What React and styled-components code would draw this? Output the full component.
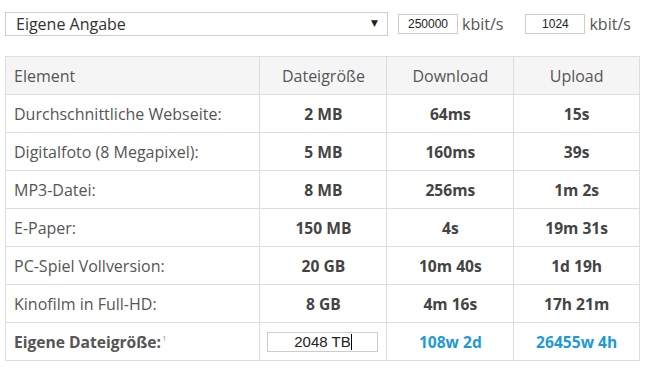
import React from "react";
import styled, { createGlobalStyle } from "styled-components";

const GlobalStyle = createGlobalStyle`
  body {
    margin: 0;
    background: #fff;
    font-family: "Open Sans", "Liberation Sans", sans-serif;
  }
`;

const Page = styled.div`
  width: 646px;
  padding: 12px 6px 0 5px;
  box-sizing: border-box;
`;

const Toolbar = styled.div`
  display: flex;
  align-items: center;
  height: 24px;
`;

const SelectBox = styled.div`
  position: relative;
  width: 383px;
  height: 24px;
  box-sizing: border-box;
  border: 1px solid #ccc;
  display: flex;
  align-items: center;
  padding-left: 10px;
  font-size: 16px;
  color: #333;
`;

const Arrow = styled.span`
  position: absolute;
  right: 9px;
  top: 5px;
  font-size: 9px;
  color: #222;
  font-family: "DejaVu Sans", sans-serif;
`;

const RateInput = styled.input`
  width: 60px;
  height: 20px;
  box-sizing: border-box;
  border: 1px solid #ccc;
  margin-left: ${(p) => p.$gap}px;
  font-family: "Liberation Sans", Arial, sans-serif;
  font-size: 12px;
  text-align: center;
  color: #222;
  padding: 0;
  outline: none;
`;

const Unit = styled.span`
  margin-left: 4px;
  font-size: 16px;
  color: #555;
`;

const Table = styled.table`
  margin-top: 20px;
  width: 635px;
  border-collapse: collapse;
  font-size: 16px;
`;

const Col = styled.col`
  width: ${(p) => p.$w}px;
`;

const Th = styled.th`
  height: 37px;
  padding: 0 8px;
  border: 1px solid #ddd;
  background: #f5f5f5;
  font-weight: 400;
  color: #555;
  text-align: ${(p) => (p.$left ? "left" : "center")};
`;

const Td = styled.td`
  height: 37px;
  padding: 0 8px;
  border: 1px solid #ddd;
  color: ${(p) => (p.$blue ? "#1e9ad6" : p.$label ? "#555" : "#444")};
  font-weight: ${(p) => (p.$label && !p.$strong ? 400 : 700)};
  font-size: ${(p) => (p.$label && !p.$strong ? "16px" : "15.6px")};
  text-align: ${(p) => (p.$label ? "left" : "center")};
`;

const Sup = styled.sup`
  font-size: 8px;
  font-weight: 400;
  color: #9d96d4;
  vertical-align: 7px;
  margin-left: 1px;
`;

const SizeField = styled.div`
  width: 111px;
  height: 20px;
  box-sizing: border-box;
  border: 1px solid #ccc;
  margin: 0 auto 0 -1px;
  display: flex;
  align-items: center;
  justify-content: center;
  font-family: "Liberation Sans", Arial, sans-serif;
  font-size: 15px;
  font-weight: 400;
  color: #222;
`;

const Caret = styled.span`
  display: inline-block;
  width: 1px;
  height: 16px;
  background: #000;
`;

const rows = [
  ["Durchschnittliche Webseite:", "2 MB", "64ms", "15s"],
  ["Digitalfoto (8 Megapixel):", "5 MB", "160ms", "39s"],
  ["MP3-Datei:", "8 MB", "256ms", "1m 2s"],
  ["E-Paper:", "150 MB", "4s", "19m 31s"],
  ["PC-Spiel Vollversion:", "20 GB", "10m 40s", "1d 19h"],
  ["Kinofilm in Full-HD:", "8 GB", "4m 16s", "17h 21m"],
];

export default function App() {
  return (
    <Page>
      <GlobalStyle />
      <Toolbar>
        <SelectBox>
          Eigene Angabe
          <Arrow>▼</Arrow>
        </SelectBox>
        <RateInput $gap={10} value="250000" readOnly />
        <Unit>kbit/s</Unit>
        <RateInput $gap={22} value="1024" readOnly />
        <Unit>kbit/s</Unit>
      </Toolbar>
      <Table>
        <colgroup>
          <Col $w={255} />
          <Col $w={127} />
          <Col $w={127} />
          <Col $w={126} />
        </colgroup>
        <thead>
          <tr>
            <Th $left>Element</Th>
            <Th>Dateigröße</Th>
            <Th>Download</Th>
            <Th>Upload</Th>
          </tr>
        </thead>
        <tbody>
          {rows.map((r) => (
            <tr key={r[0]}>
              <Td $label>{r[0]}</Td>
              <Td>{r[1]}</Td>
              <Td>{r[2]}</Td>
              <Td>{r[3]}</Td>
            </tr>
          ))}
          <tr>
            <Td $label $strong>
              Eigene Dateigröße:<Sup>1</Sup>
            </Td>
            <Td>
              <SizeField>
                2048 TB
                <Caret />
              </SizeField>
            </Td>
            <Td $blue>108w 2d</Td>
            <Td $blue>26455w 4h</Td>
          </tr>
        </tbody>
      </Table>
    </Page>
  );
}
